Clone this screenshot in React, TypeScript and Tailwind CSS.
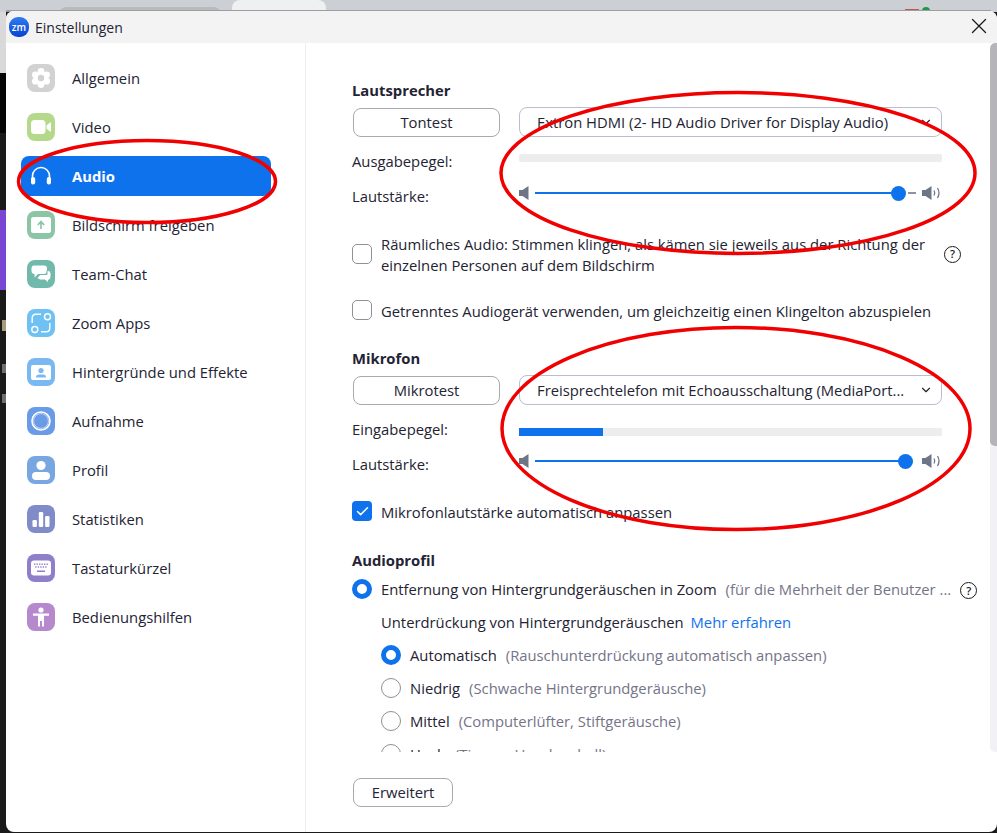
import type { ReactNode } from 'react';
import { Check, ChevronDown, X } from 'lucide-react';

const font = '[font-family:"Open_Sans",sans-serif]';

function Tile({ color, children }: { color: string; children: ReactNode }) {
  return (
    <svg width="28" height="28" viewBox="0 0 28 28" className="shrink-0">
      <rect x="0" y="0" width="28" height="28" rx="8" fill={color} />
      {children}
    </svg>
  );
}

const menu: { label: string; icon: ReactNode; active?: boolean }[] = [
  {
    label: 'Allgemein',
    icon: (
      <Tile color="#d2d2d2">
        <g fill="#fff">
          <circle cx="14" cy="7.5" r="3.4" />
          <circle cx="14" cy="20.5" r="3.4" />
          <circle cx="8.4" cy="10.8" r="3.4" />
          <circle cx="19.6" cy="10.8" r="3.4" />
          <circle cx="8.4" cy="17.2" r="3.4" />
          <circle cx="19.6" cy="17.2" r="3.4" />
          <circle cx="14" cy="14" r="6" />
        </g>
        <circle cx="14" cy="14" r="3.2" fill="#d2d2d2" />
      </Tile>
    ),
  },
  {
    label: 'Video',
    icon: (
      <Tile color="#b4d98b">
        <rect x="4" y="7" width="14.5" height="14" rx="3.5" fill="#fff" />
        <path d="M19.5 12.5 L23 9.6 Q24 9 24 10.2 V17.8 Q24 19 23 18.4 L19.5 15.5 Z" fill="#fff" />
      </Tile>
    ),
  },
  {
    label: 'Audio',
    active: true,
    icon: (
      <svg width="28" height="28" viewBox="0 0 28 28" className="shrink-0">
        <path d="M5.5 17 V14 a8.5 8.5 0 0 1 17 0 V17" fill="none" stroke="#fff" strokeWidth="1.6" />
        <rect x="4" y="15" width="4.2" height="7.5" rx="2" fill="#fff" />
        <rect x="19.8" y="15" width="4.2" height="7.5" rx="2" fill="#fff" />
      </svg>
    ),
  },
  {
    label: 'Bildschirm freigeben',
    icon: (
      <Tile color="#8cc5a6">
        <rect x="4" y="6" width="20" height="16" rx="2.5" fill="#fff" />
        <path d="M14 18 V11 M10.8 14 L14 10.6 L17.2 14" fill="none" stroke="#8cc5a6" strokeWidth="1.7" />
      </Tile>
    ),
  },
  {
    label: 'Team-Chat',
    icon: (
      <Tile color="#71b9ab">
        <path d="M7 5.5 H17 Q20 5.5 20 8.5 V11 Q20 14 17 14 H11 L7.5 17.5 V14 Q4.5 14 4.5 11 V8.5 Q4.5 5.5 7 5.5 Z" fill="#fff" />
        <path d="M13 14.5 H20 V10.5 H21 Q24 10.5 24 13.5 V17 Q24 20 21.5 20 V23 L18 20 H13.5 Q10.5 20 10.5 17.5 Z" fill="#fff" stroke="#71b9ab" strokeWidth="1" />
      </Tile>
    ),
  },
  {
    label: 'Zoom Apps',
    icon: (
      <Tile color="#6fc1f4">
        <g fill="none" stroke="#fff" strokeWidth="1.4">
          <path d="M5.2 14 V9 Q5.2 5.2 9 5.2 H14" />
          <path d="M22.8 14 V19 Q22.8 22.8 19 22.8 H14" />
          <circle cx="20.5" cy="7.8" r="3" />
          <circle cx="7.8" cy="20.5" r="3" />
        </g>
      </Tile>
    ),
  },
  {
    label: 'Hintergründe und Effekte',
    icon: (
      <Tile color="#79b8f1">
        <rect x="4" y="7" width="20" height="15" rx="2" fill="#fff" />
        <circle cx="14" cy="12.5" r="2.6" fill="#79b8f1" />
        <path d="M9 19.5 Q9 16.5 12 16.5 H16 Q19 16.5 19 19.5 Z" fill="#79b8f1" />
      </Tile>
    ),
  },
  {
    label: 'Aufnahme',
    icon: (
      <Tile color="#6a9be6">
        <g fill="none">
          <circle cx="14" cy="14" r="9" stroke="#fff" strokeWidth="1.6" />
          <circle cx="14" cy="14" r="7.4" stroke="#d5e3f9" strokeWidth="0.8" />
        </g>
      </Tile>
    ),
  },
  {
    label: 'Profil',
    icon: (
      <Tile color="#78a6e0">
        <circle cx="14" cy="9.5" r="4.6" fill="#fff" />
        <path d="M5 20 Q5 16 9 16 H19 Q23 16 23 20 Q23 24 19 24 H9 Q5 24 5 20 Z" fill="#fff" />
      </Tile>
    ),
  },
  {
    label: 'Statistiken',
    icon: (
      <Tile color="#7f8cc8">
        <rect x="5.5" y="15" width="4.4" height="7" rx="1.2" fill="#fff" />
        <rect x="11.8" y="7" width="4.4" height="15" rx="1.2" fill="#fff" />
        <rect x="18.1" y="11" width="4.4" height="11" rx="1.2" fill="#fff" />
      </Tile>
    ),
  },
  {
    label: 'Tastaturkürzel',
    icon: (
      <Tile color="#8f7fc8">
        <rect x="4" y="6.5" width="20" height="15" rx="3" fill="#fff" />
        <g fill="#8f7fc8">
          {[7, 9.5, 12, 14.5, 17, 19.5].map((x) => (
            <rect key={x} x={x} y="9.5" width="1.4" height="1.4" />
          ))}
          {[8.2, 10.7, 13.2, 15.7, 18.2].map((x) => (
            <rect key={x} x={x} y="12.3" width="1.4" height="1.4" />
          ))}
          <rect x="10" y="16.5" width="8" height="1.5" />
        </g>
      </Tile>
    ),
  },
  {
    label: 'Bedienungshilfen',
    icon: (
      <Tile color="#b589cc">
        <circle cx="14" cy="7" r="2.6" fill="#fff" />
        <path d="M6 10.5 H22 V12.8 H17 V23.5 H15 V18 H13 V23.5 H11 V12.8 H6 Z" fill="#fff" />
      </Tile>
    ),
  },
];

function SmallSpeaker() {
  return (
    <svg width="10" height="14" viewBox="0 0 10 14" className="shrink-0">
      <path d="M0 4 H3.5 L9.5 0 V14 L3.5 10 H0 Z" fill="#6d7687" />
    </svg>
  );
}

function BigSpeaker() {
  return (
    <svg width="20" height="14" viewBox="0 0 20 14" className="shrink-0">
      <path d="M0 4 H3.5 L9.5 0 V14 L3.5 10 H0 Z" fill="#6d7687" />
      <path d="M12 4.5 Q13.5 7 12 9.5 M15.5 2 Q18.5 7 15.5 12" fill="none" stroke="#6d7687" strokeWidth="1.3" />
    </svg>
  );
}

function Slider({ filled, rest }: { filled: string; rest?: boolean }) {
  return (
    <div className="flex h-[14px] -mt-px items-center">
      <SmallSpeaker />
      <div className={`ml-[6px] h-[2px] bg-[#0e72ed] ${filled}`} />
      <div className="h-[15px] w-[15px] shrink-0 rounded-full bg-[#0e72ed] -ml-px" />
      {rest && <div className="ml-[2px] h-[2px] w-[8px] bg-[#8d93a0]" />}
      <div className="flex-1" />
      <BigSpeaker />
    </div>
  );
}

function CheckBox({ checked, className }: { checked?: boolean; className?: string }) {
  return checked ? (
    <div className={`flex h-5 w-5 shrink-0 items-center justify-center rounded-[4px] bg-[#0e72ed] ${className}`}>
      <Check size={15} color="#fff" strokeWidth={2.4} />
    </div>
  ) : (
    <div className={`h-5 w-5 shrink-0 rounded-[5px] border border-[#8f8f96] bg-white ${className}`} />
  );
}

function Radio({ on, className }: { on?: boolean; className?: string }) {
  return on ? (
    <div className={`h-5 w-5 shrink-0 rounded-full border-[5px] border-[#0e72ed] bg-white ${className}`} />
  ) : (
    <div className={`h-5 w-5 shrink-0 rounded-full border border-[#8f8f96] bg-white ${className}`} />
  );
}

function Help({ className }: { className?: string }) {
  return (
    <div className={`flex h-[17px] w-[17px] shrink-0 items-center justify-center rounded-full border-[1.5px] border-[#1a1a1a] text-[11px] font-semibold text-[#1a1a1a] ${className}`}>
      ?
    </div>
  );
}

function DeviceRow({ test, device }: { test: string; device: string }) {
  return (
    <div className="mt-[7px] flex h-[30px] w-[590px] items-start">
      <button className="ml-px mt-px h-[29px] w-[147px] rounded-lg border border-[#a9a9ae] bg-white text-center">{test}</button>
      <div className="ml-[19px] flex h-[30px] flex-1 items-center justify-between rounded-lg border border-[#bdbdd0] bg-white pl-[17px] pr-[8px]">
        <span className="whitespace-nowrap">{device}</span>
        <ChevronDown size={14} color="#232333" />
      </div>
    </div>
  );
}

function LabelRow({ label, className, children }: { label: string; className: string; children: ReactNode }) {
  return (
    <div className={`grid h-5 w-[590px] grid-cols-[167px_1fr] leading-[18px] ${className}`}>
      <span>{label}</span>
      <div>{children}</div>
    </div>
  );
}

function SubOption({ label, note, on, className }: { label: string; note: string; on?: boolean; className?: string }) {
  return (
    <div className={`ml-[29px] flex h-5 items-start leading-[18px] ${className}`}>
      <Radio on={on} className="-mt-px" />
      <span className="ml-[9px] whitespace-nowrap">{label}</span>
      <span className="ml-[9px] whitespace-nowrap text-[#747487]">{note}</span>
    </div>
  );
}

export default function App() {
  return (
    <div className={`relative h-[833px] w-[997px] overflow-hidden bg-[#1a1a1a] text-[14.8px] text-[#232333] ${font}`}>
      {/* stuff behind the window */}
      <div className="absolute inset-x-0 top-0 h-[12px] bg-[#ccd0d4]" />
      <div className="absolute left-[60px] top-[7px] h-[6px] w-[160px] rounded-t-lg bg-[#b8bbbe]" />
      <div className="absolute left-[232px] top-0 h-[12px] w-[94px] rounded-t-lg bg-[#eef0f2]" />
      <div className="absolute left-[905px] top-[9px] h-[3px] w-[14px] bg-[#c0574a]" />
      <div className="absolute left-[922px] top-[7px] h-2 w-2 rounded-full bg-[#1a9a50]" />
      <div className="absolute inset-x-[6px] top-[10px] h-[2px] bg-[#9c9ea2]" />
      <div className="absolute left-0 top-[12px] flex h-[821px] w-[6px] flex-col">
        <div className="h-[61px] bg-[#d9d9d9]" />
        <div className="h-[60px] bg-[#050505]" />
        <div className="h-[77px] bg-[#1a1a1a]" />
        <div className="h-[80px] bg-[#7a45d3]" />
        <div className="ml-[2px] mt-[30px] h-[11px] w-[4px] bg-[#a8997a]" />
        <div className="ml-[2px] mt-[33px] h-[9px] w-[4px] bg-[#6e6e6e]" />
        <div className="ml-[2px] mt-[21px] h-[9px] w-[4px] bg-[#6e6e6e]" />
      </div>

      {/* settings window */}
      <div className="absolute left-[6px] top-[11px] flex h-[821px] w-[991px] flex-col overflow-hidden rounded-[8px] bg-white">
        <div className="flex h-[32px] shrink-0 items-center bg-[#f3f3f3] pl-[3px]">
          <div className="flex h-5 w-5 items-center justify-center rounded-[9px] bg-linear-to-b from-[#2f7bf5] to-[#0a42d0] text-[10px] font-semibold leading-none text-white">zm</div>
          <span className="ml-[6px] flex-1 text-[14px]">Einstellungen</span>
          <X size={26} color="#1a1a1a" strokeWidth={1.2} className="-mt-[2px] mr-[5px]" />
        </div>

        <div className="flex min-h-0 flex-1">
          <div className="flex w-[300px] shrink-0 flex-col gap-[9px] border-r border-[#ededed] pl-[15px] pt-[15px]">
            {menu.map((item) => (
              <div
                key={item.label}
                className={`flex h-10 w-[250px] items-center rounded-lg pl-[6px] ${item.active ? 'bg-[#0e72ed] font-bold text-white' : ''}`}
              >
                {item.icon}
                <span className="ml-[17px]">{item.label}</span>
              </div>
            ))}
          </div>

          <div className="relative flex min-w-0 flex-1 flex-col">
            <div className="h-[709px] overflow-hidden pl-[46px] pt-[37px]">
              <div className="h-5 font-bold leading-5">Lautsprecher</div>
              <DeviceRow test="Tontest" device="Extron HDMI (2- HD Audio Driver for Display Audio)" />
              <LabelRow label="Ausgabepegel:" className="mt-[15px]">
                <div className="mt-[2px] h-2 rounded-[2px] bg-[#ededed]" />
              </LabelRow>
              <LabelRow label="Lautstärke:" className="mt-[15px]">
                <Slider filled="w-[357px]" rest />
              </LabelRow>

              <div className="mt-[28px] flex h-[42px] w-[610px] items-start">
                <CheckBox className="mt-[9px]" />
                <div className="-mt-px ml-[9px] w-[556px] leading-[21px]">
                  Räumliches Audio: Stimmen klingen, als kämen sie jeweils aus der Richtung der einzelnen Personen auf dem Bildschirm
                </div>
                <Help className="ml-[7px] mt-[11px]" />
              </div>
              <div className="mt-[25px] flex h-5 items-start leading-[18px]">
                <CheckBox className="-mt-[2px]" />
                <span className="ml-[9px] whitespace-nowrap">Getrenntes Audiogerät verwenden, um gleichzeitig einen Klingelton abzuspielen</span>
              </div>

              <div className="mt-[26px] h-5 font-bold leading-5">Mikrofon</div>
              <DeviceRow test="Mikrotest" device="Freisprechtelefon mit Echoausschaltung (MediaPort..." />
              <LabelRow label="Eingabepegel:" className="mt-[15px]">
                <div className="mt-2 h-2 rounded-[2px] bg-[#ededed]">
                  <div className="h-2 w-[84px] bg-[#0e72ed]" />
                </div>
              </LabelRow>
              <LabelRow label="Lautstärke:" className="mt-[15px]">
                <Slider filled="w-[364px]" />
              </LabelRow>
              <div className="mt-[28px] flex h-5 items-start leading-[18px]">
                <CheckBox checked className="-mt-[2px]" />
                <span className="ml-[9px] whitespace-nowrap">Mikrofonlautstärke automatisch anpassen</span>
              </div>

              <div className="mt-[29px] h-5 font-bold leading-[17px]">Audioprofil</div>
              <div className="mt-[8px] flex h-5 items-start leading-[18px]">
                <Radio on className="-mt-px" />
                <span className="ml-[9px] whitespace-nowrap">Entfernung von Hintergrundgeräuschen in Zoom</span>
                <span className="ml-[9px] whitespace-nowrap text-[#747487]">(für die Mehrheit der Benutzer ...</span>
                <Help className="ml-[9px] mt-[2px]" />
              </div>
              <div className="ml-[29px] mt-[13px] h-5 whitespace-nowrap leading-[18px]">
                Unterdrückung von Hintergrundgeräuschen <span className="ml-[3px] text-[#0e72ed]">Mehr erfahren</span>
              </div>
              <SubOption on label="Automatisch" note="(Rauschunterdrückung automatisch anpassen)" className="mt-[13px]" />
              <SubOption label="Niedrig" note="(Schwache Hintergrundgeräusche)" className="mt-[13px]" />
              <SubOption label="Mittel" note="(Computerlüfter, Stiftgeräusche)" className="mt-[13px]" />
              <SubOption label="Hoch" note="(Tippen, Hundegebell)" className="mt-[13px]" />
            </div>
            <div className="flex-1 pl-[47px] pt-[26px]">
              <button className="h-[29px] w-[100px] rounded-lg border border-[#a9a9ae] bg-white">Erweitert</button>
            </div>

            <div className="absolute bottom-[80px] right-0 top-0 flex w-[7px] flex-col overflow-hidden rounded-l-[5px] bg-[#f1f1f6]">
              <div className="h-[403px] rounded-l-[5px] bg-[#b4b4b9]" />
            </div>
          </div>
        </div>
      </div>

      {/* red marker ellipses drawn on the screenshot */}
      <svg className="absolute inset-0" width="997" height="833" viewBox="0 0 997 833" fill="none" stroke="#f00000" strokeWidth="3.5">
        <ellipse cx="147" cy="181.5" rx="128.5" ry="41" />
        <ellipse cx="738" cy="173" rx="237" ry="80.5" />
        <ellipse cx="736" cy="428.5" rx="234" ry="101" />
      </svg>
    </div>
  );
}
